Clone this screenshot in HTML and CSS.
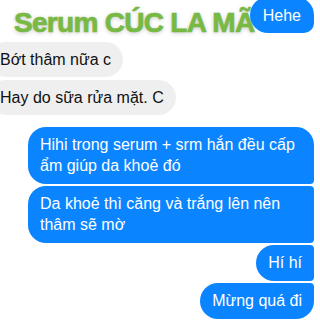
FILE: index.html
```html
<!DOCTYPE html>
<html lang="vi">

<head>
    <meta charset="UTF-8">
    <meta name="viewport" content="width=device-width, initial-scale=1.0">
    <title>Serum CÚC LA MÃ</title>
    <link rel="stylesheet" href="styles.css">
</head>

<body>
    <div class="chat">
        <!-- chữ tiêu đề đè lên khung chat -->
        <h1 class="title">Serum CÚC LA MÃ</h1>

        <div class="msg me hehe">Hehe</div>

        <div class="group them">
            <div class="msg">Bớt thâm nữa c</div>
            <div class="msg">Hay do sữa rửa mặt. C</div>
        </div>

        <div class="group mine">
            <div class="msg me first">Hihi trong serum + srm hắn đều cấp ẩm giúp da khoẻ đó</div>
            <div class="msg me mid">Da khoẻ thì căng và trắng lên nên thâm sẽ mờ</div>
            <div class="msg me mid">Hí hí</div>
            <div class="msg me last">Mừng quá đi</div>
        </div>
    </div>
</body>

</html>
```

FILE: styles.css
```css
* {
    margin: 0;
    padding: 0;
    box-sizing: border-box;
}

body {
    width: 320px;
    height: 320px;
    overflow: hidden;
    background: #fff;
    font-family: "Liberation Sans", Arial, sans-serif;
}

/* khung chat */
.chat {
    position: relative;
    display: flex;
    flex-direction: column;
    padding: 0 6px 0 0;
}

/* tiêu đề xanh lá */
.title {
    position: absolute;
    left: 14px;
    top: 7px;
    font-size: 28px;
    font-weight: 700;
    line-height: 32px;
    letter-spacing: -0.7px;
    color: #78b944;
    -webkit-text-stroke: 0.7px #78b944;
    text-shadow: 0 1px 4px rgba(0, 0, 0, 0.25);
    white-space: nowrap;
}

/* bong bóng tin nhắn */
.msg {
    font-size: 16px;
    line-height: 21px;
    padding: 7px 12px;
    border-radius: 18px;
    max-width: 286px;
    color: #111;
    background: #efefef;
}

.msg.me {
    color: #fff;
    background: #0a84ff;
}

.hehe {
    position: relative;
    align-self: flex-end;
    margin-top: -3px;
    padding: 8px 13px 7px;
    border-radius: 18px 18px 10px 18px;
}

.group {
    display: flex;
    flex-direction: column;
    gap: 3px;
}

.them {
    align-items: flex-start;
    margin: 9px 0 0 -12px;
}

.mine {
    align-items: flex-end;
    margin-top: 12px;
    gap: 2px;
}

.mine .msg {
    padding: 7px 12px 8px 12px;
}

.mine .first {
    border-radius: 18px 18px 4px 18px;
}

.mine .mid {
    border-radius: 18px 4px 4px 18px;
}

.mine .last {
    border-radius: 18px 4px 18px 18px;
}
```
